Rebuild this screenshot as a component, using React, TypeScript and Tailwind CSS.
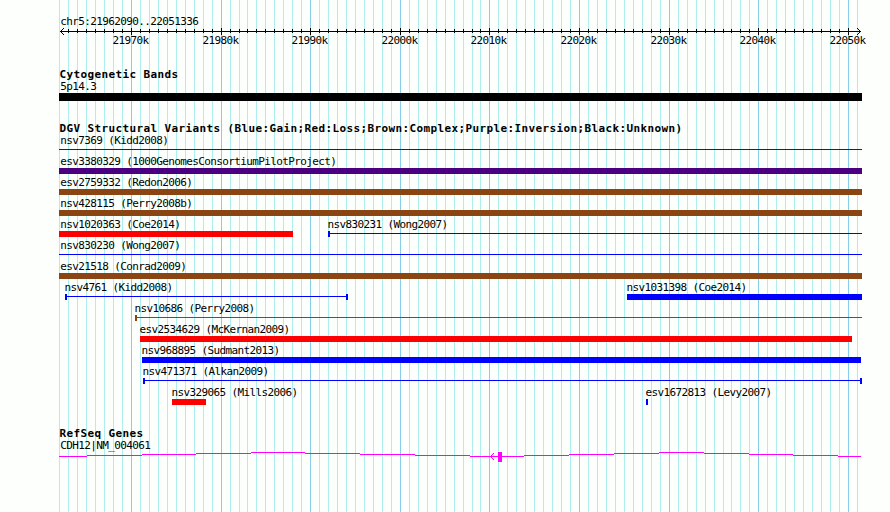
import type { FC } from 'react';

type Shape = 'bar' | 'span';

interface Feature {
  name: string;
  start: number;
  end: number;
  shape: Shape;
  color: string;
  openLeft?: boolean;
  openRight?: boolean;
}

const LEFT = 59;
const RIGHT = 862;

const BLUE = 'bg-[#0000ff]';
const RED = 'bg-[#ff0000]';
const BROWN = 'bg-[#8b4513]';
const INDIGO = 'bg-[#4b0082]';

const LABEL = "font-['DejaVu_Sans_Mono','Liberation_Mono',monospace] text-[11px] leading-[13px] tracking-[-0.622px] whitespace-pre";
const TITLE = "font-['DejaVu_Sans_Mono','Liberation_Mono',monospace] text-[11px] leading-[13px] font-bold tracking-[0.378px] whitespace-pre";

// One line per kilobase; a few intervals lose a pixel to rounding.
const SHORT_STEPS = [21, 47, 75];
const gridLines = Array.from({ length: 90 }, (_, i) => ({
  x: LEFT + 9 * i - SHORT_STEPS.filter((s) => s <= i).length,
  kb: 21962 + i,
})).filter((line) => line.x <= 857);

const rows: Feature[][] = [
  [{ name: 'nsv7369 (Kidd2008)', start: 59, end: 862, shape: 'span', color: INDIGO, openLeft: true, openRight: true }],
  [{ name: 'esv3380329 (1000GenomesConsortiumPilotProject)', start: 59, end: 862, shape: 'bar', color: INDIGO }],
  [{ name: 'esv2759332 (Redon2006)', start: 59, end: 862, shape: 'bar', color: BROWN }],
  [{ name: 'nsv428115 (Perry2008b)', start: 59, end: 862, shape: 'bar', color: BROWN }],
  [
    { name: 'nsv1020363 (Coe2014)', start: 59, end: 293, shape: 'bar', color: RED },
    { name: 'nsv830231 (Wong2007)', start: 328, end: 862, shape: 'span', color: BLUE, openRight: true },
  ],
  [{ name: 'nsv830230 (Wong2007)', start: 59, end: 862, shape: 'span', color: BLUE, openLeft: true, openRight: true }],
  [{ name: 'esv21518 (Conrad2009)', start: 59, end: 862, shape: 'bar', color: BROWN }],
  [
    { name: 'nsv4761 (Kidd2008)', start: 65, end: 348, shape: 'span', color: BLUE },
    { name: 'nsv1031398 (Coe2014)', start: 627, end: 862, shape: 'bar', color: BLUE },
  ],
  [{ name: 'nsv10686 (Perry2008)', start: 135, end: 862, shape: 'span', color: BROWN, openRight: true }],
  [{ name: 'esv2534629 (McKernan2009)', start: 140, end: 852, shape: 'bar', color: RED }],
  [{ name: 'nsv968895 (Sudmant2013)', start: 142, end: 861, shape: 'bar', color: BLUE }],
  [{ name: 'nsv471371 (Alkan2009)', start: 143, end: 862, shape: 'span', color: BLUE }],
  [
    { name: 'nsv329065 (Mills2006)', start: 172, end: 206, shape: 'bar', color: RED },
    { name: 'esv1672813 (Levy2007)', start: 646, end: 648, shape: 'bar', color: BLUE },
  ],
];

// Intron line, stepped one pixel at a time: [from, to, y]
const intron: [number, number, number][] = [
  [59, 87, 4], [87, 142, 3], [142, 196, 2], [196, 251, 1], [251, 305, 0],
  [305, 360, 1], [360, 415, 2], [415, 470, 3], [470, 524, 4], [524, 569, 3],
  [569, 614, 2], [614, 659, 1], [659, 704, 0], [704, 749, 1], [749, 793, 2],
  [793, 838, 3], [838, 861, 4],
];

const Grid: FC = () => (
  <svg className="absolute inset-0" width="890" height="512" shapeRendering="crispEdges">
    {gridLines.map(({ x, kb }) => (
      <rect key={kb} x={x} y="0" width="1" height="512" className={kb % 10 === 0 ? 'fill-[#87ceeb]' : 'fill-[#afeeee]'} />
    ))}
  </svg>
);

const Ruler: FC = () => (
  <svg className="block" width="890" height="21" shapeRendering="crispEdges">
    <rect x="60" y="3" width="801" height="1" />
    {gridLines.slice(1, -1).map(({ x, kb }) =>
      kb % 10 === 0 ? (
        <rect key={kb} x={x} y="0" width="1" height="7" />
      ) : (
        <rect key={kb} x={x} y="1" width="1" height="4" />
      ),
    )}
    <path d="M61 2h1v1h-1zM62 1h1v1h-1zM63 0h1v1h-1zM61 4h1v1h-1zM62 5h1v1h-1zM63 6h1v1h-1z" />
    <path d="M859 2h1v1h-1zM858 1h1v1h-1zM857 0h1v1h-1zM859 4h1v1h-1zM858 5h1v1h-1zM857 6h1v1h-1z" />
    {gridLines
      .filter(({ kb }) => kb % 10 === 0)
      .map(({ x, kb }) => (
        <text key={kb} x={x - 18.5} y="16" className={LABEL}>
          {`${kb}k`}
        </text>
      ))}
  </svg>
);

const Glyph: FC<{ feature: Feature }> = ({ feature }) => {
  const { shape, color, openLeft, openRight } = feature;
  if (shape === 'bar') return <div className={`h-1.5 ${color}`} />;
  return (
    <div className="flex h-1.5">
      {!openLeft && <div className={`h-1.5 w-0.5 ${color}`} />}
      <div className={`mt-0.5 h-px flex-1 ${color}`} />
      {!openRight && <div className={`h-1.5 w-0.5 ${color}`} />}
    </div>
  );
};

const TrackRow: FC<{ features: Feature[] }> = ({ features }) => (
  <div className="flex h-[21px]">
    {features.map((feature, i) => {
      const offset = feature.start - (i === 0 ? 0 : features[i - 1].end);
      return (
        <div
          key={feature.name}
          className="shrink-0"
          style={{ marginLeft: offset, width: feature.end - feature.start }}
        >
          <div className={`h-[13px] w-0 ${feature.start === LEFT ? 'pl-[1.3px]' : '-ml-[0.5px]'} ${LABEL}`}>{feature.name}</div>
          <Glyph feature={feature} />
        </div>
      );
    })}
  </div>
);

const Gene: FC = () => (
  <svg className="block fill-[#ff00ff]" width="890" height="10" shapeRendering="crispEdges">
    {intron.map(([from, to, y]) => (
      <rect key={from} x={from} y={y} width={to - from} height="1" />
    ))}
    <path d="M491 3h1v1h-1zM492 2h1v1h-1zM493 1h1v1h-1zM491 5h1v1h-1zM492 6h1v1h-1zM493 7h1v1h-1z" />
    <rect x="498" y="0" width="4" height="10" />
  </svg>
);

const App: FC = () => (
  <main className="relative h-[512px] w-[890px] overflow-hidden bg-[#fcfffc] text-black">
    <Grid />
    <div className="relative pt-[15px]">
      <p className={`h-[13px] pl-[60.3px] ${LABEL}`}>chr5:21962090..22051336</p>
      <Ruler />

      <section className="pt-[19px]">
        <h2 className={`h-[12px] pl-[59.4px] ${TITLE}`}>Cytogenetic Bands</h2>
        <p className={`h-[13px] pl-[60.3px] ${LABEL}`}>5p14.3</p>
        <div className="h-2 bg-black" style={{ marginLeft: LEFT, width: RIGHT - LEFT }} />
      </section>

      <section className="pt-[21px]">
        <h2 className={`h-[12px] pl-[59.4px] ${TITLE}`}>
          DGV Structural Variants (Blue:Gain;Red:Loss;Brown:Complex;Purple:Inversion;Black:Unknown)
        </h2>
        {rows.map((features) => (
          <TrackRow key={features[0].name} features={features} />
        ))}
      </section>

      <section className="pt-[20px]">
        <h2 className={`h-[12px] pl-[59.4px] ${TITLE}`}>RefSeq Genes</h2>
        <p className={`h-[13px] pl-[60.3px] ${LABEL}`}>CDH12|NM_004061</p>
        <Gene />
      </section>
    </div>
  </main>
);

export default App;
